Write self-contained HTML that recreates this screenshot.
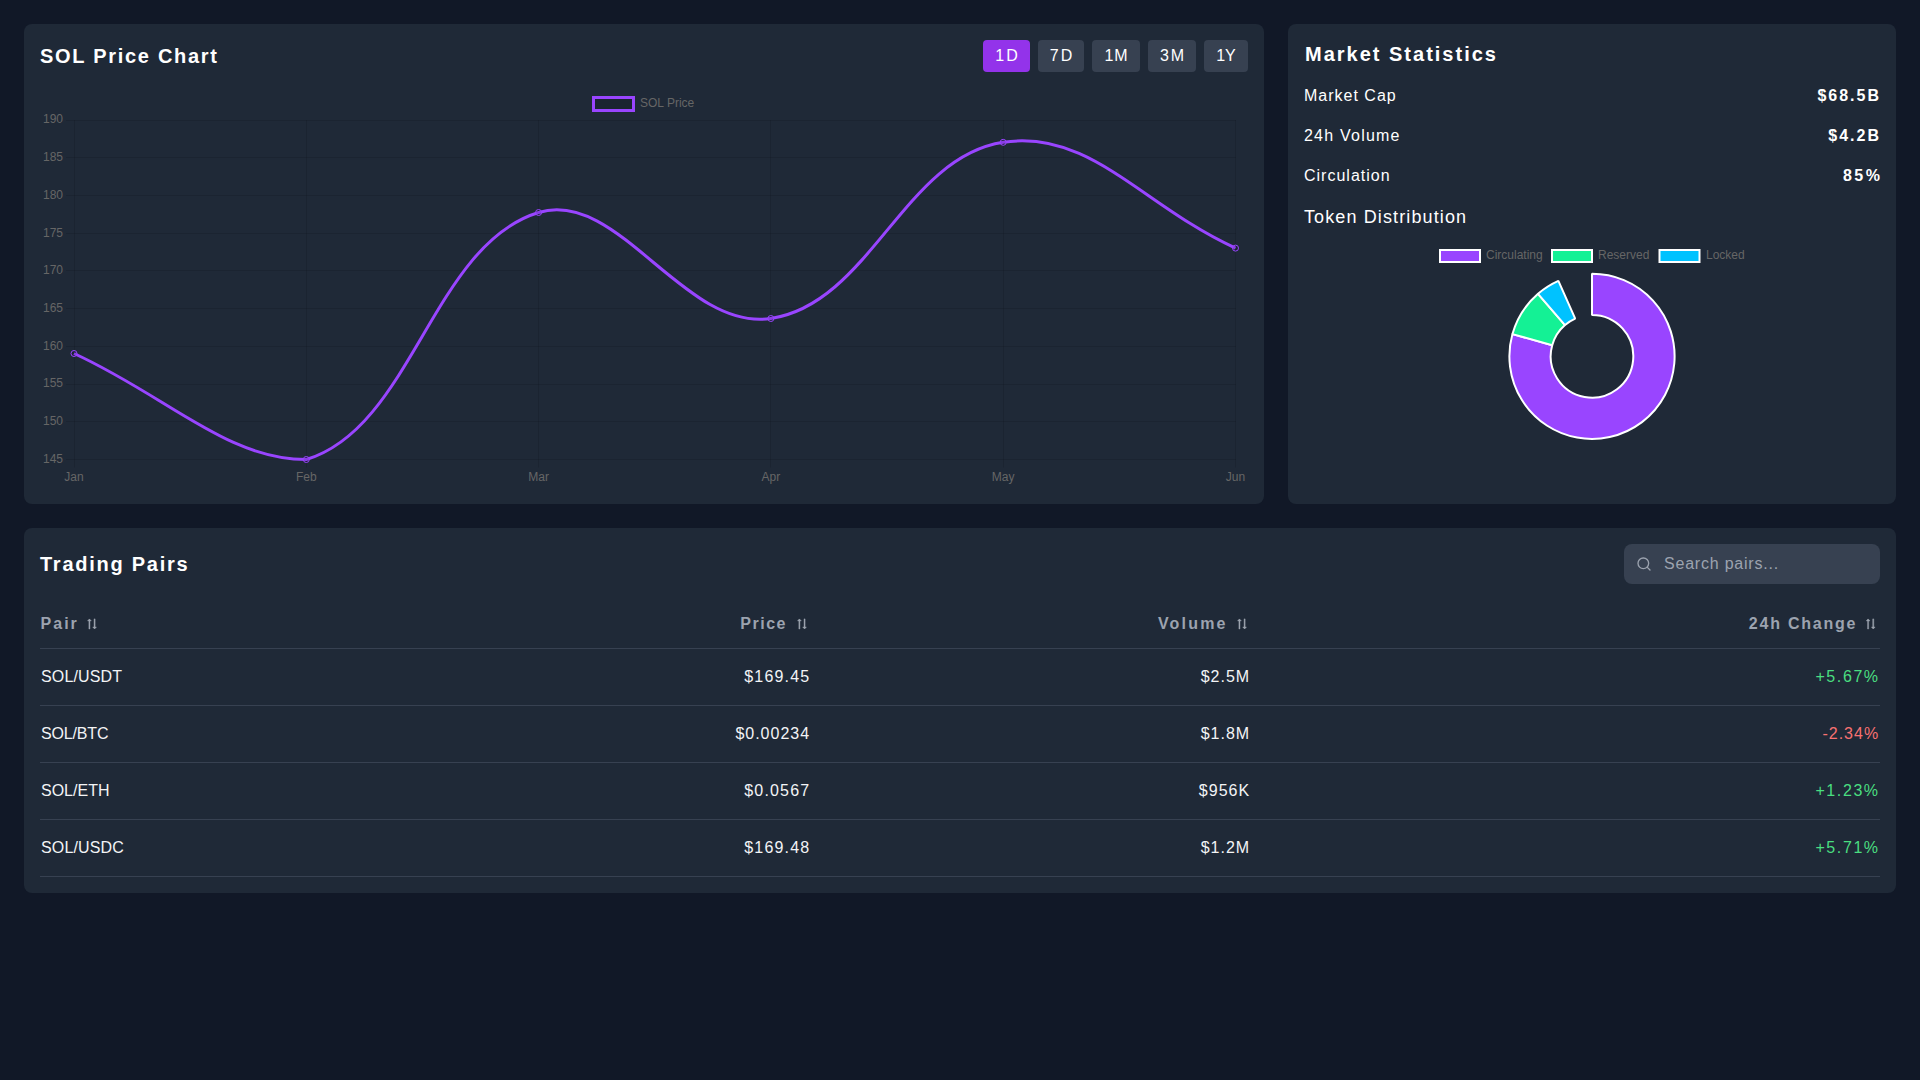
<!DOCTYPE html>
<html><head><meta charset="utf-8"><title>SOL Dashboard</title>
<style>
html,body{margin:0;padding:0;}
body{width:1920px;height:1080px;background:#111827;position:relative;overflow:hidden;font-family:"Liberation Sans", sans-serif;}
.card{position:absolute;background:#1f2937;border-radius:8px;}
.t{position:absolute;white-space:pre;}
.btn{position:absolute;top:40px;height:32px;border-radius:4px;color:#fff;font-size:16px;line-height:32px;text-align:center;}
.hl{position:absolute;left:40px;width:1840px;height:1px;background:#374151;}
svg{position:absolute;left:0;top:0;}
</style></head>
<body>
<div class="card" style="left:24px;top:24px;width:1240px;height:480px"></div>
<div class="card" style="left:1288px;top:24px;width:608px;height:480px"></div>
<div class="card" style="left:24px;top:528px;width:1872px;height:365px"></div>
<div style="position:absolute;left:1624px;top:544px;width:256px;height:40px;background:#374151;border-radius:8px"></div>
<div class="hl" style="top:648px"></div><div class="hl" style="top:705px"></div><div class="hl" style="top:762px"></div><div class="hl" style="top:819px"></div><div class="hl" style="top:876px"></div>
<svg width="1920" height="1080" viewBox="0 0 1920 1080">
 <g stroke="rgba(0,0,0,0.1)" stroke-width="1" fill="none"><line x1="66" y1="120.5" x2="1236.0" y2="120.5"/><line x1="66" y1="157.5" x2="1236.0" y2="157.5"/><line x1="66" y1="195.5" x2="1236.0" y2="195.5"/><line x1="66" y1="233.5" x2="1236.0" y2="233.5"/><line x1="66" y1="270.5" x2="1236.0" y2="270.5"/><line x1="66" y1="308.5" x2="1236.0" y2="308.5"/><line x1="66" y1="346.5" x2="1236.0" y2="346.5"/><line x1="66" y1="384.5" x2="1236.0" y2="384.5"/><line x1="66" y1="421.5" x2="1236.0" y2="421.5"/><line x1="66" y1="459.5" x2="1236.0" y2="459.5"/><line x1="74.5" y1="120.0" x2="74.5" y2="467.5"/><line x1="306.5" y1="120.0" x2="306.5" y2="467.5"/><line x1="538.5" y1="120.0" x2="538.5" y2="467.5"/><line x1="770.5" y1="120.0" x2="770.5" y2="467.5"/><line x1="1003.5" y1="120.0" x2="1003.5" y2="467.5"/><line x1="1235.5" y1="120.0" x2="1235.5" y2="467.5"/></g>
 <g font-family='"Liberation Sans", sans-serif' font-size="12" fill="#666"><text x="63" y="123.3" text-anchor="end">190</text><text x="63" y="161.0" text-anchor="end">185</text><text x="63" y="198.7" text-anchor="end">180</text><text x="63" y="236.5" text-anchor="end">175</text><text x="63" y="274.2" text-anchor="end">170</text><text x="63" y="311.9" text-anchor="end">165</text><text x="63" y="349.6" text-anchor="end">160</text><text x="63" y="387.4" text-anchor="end">155</text><text x="63" y="425.1" text-anchor="end">150</text><text x="63" y="462.8" text-anchor="end">145</text><text x="74.0" y="481" text-anchor="middle">Jan</text><text x="306.3" y="481" text-anchor="middle">Feb</text><text x="538.6" y="481" text-anchor="middle">Mar</text><text x="770.9" y="481" text-anchor="middle">Apr</text><text x="1003.2" y="481" text-anchor="middle">May</text><text x="1235.5" y="481" text-anchor="middle">Jun</text></g>
 <rect x="593.5" y="97.5" width="40" height="13" fill="rgba(0,0,0,0.1)" stroke="#9945FF" stroke-width="3"/>
 <text x="640" y="107.4" font-family='"Liberation Sans", sans-serif' font-size="12" fill="#666">SOL Price</text>
 <path d="M74.00,353.50 C166.92,395.90 226.47,459.50 306.30,459.50 C412.31,427.33 432.59,244.67 538.60,212.50 C618.43,188.27 684.13,331.61 770.90,318.50 C869.97,303.53 904.11,157.31 1003.20,142.30 C1089.95,129.15 1142.58,205.78 1235.50,248.10" fill="none" stroke="#9945FF" stroke-width="3"/>
 <g fill="rgba(0,0,0,0.1)" stroke="#9945FF" stroke-width="1"><circle cx="74.00" cy="353.50" r="3"/><circle cx="306.30" cy="459.50" r="3"/><circle cx="538.60" cy="212.50" r="3"/><circle cx="770.90" cy="318.50" r="3"/><circle cx="1003.20" cy="142.30" r="3"/><circle cx="1235.50" cy="248.10" r="3"/></g>
 <g stroke="#fff" stroke-width="2">
  <rect x="1440" y="250" width="40" height="12" fill="#9945FF"/>
  <rect x="1552" y="250" width="40" height="12" fill="#14F195"/>
  <rect x="1659.5" y="250" width="40" height="12" fill="#00C2FF"/>
 </g>
 <g font-family='"Liberation Sans", sans-serif' font-size="12" fill="#666">
  <text x="1486" y="259">Circulating</text><text x="1598" y="259">Reserved</text><text x="1706" y="259">Locked</text>
 </g>
 <g stroke="#fff" stroke-width="2" stroke-linejoin="bevel"><path d="M1592.00,273.70 A82.6,82.6 0 1 1 1512.44,334.10 L1552.22,345.20 A41.3,41.3 0 1 0 1592.00,315.00 Z" fill="#9945FF"/><path d="M1512.44,334.10 A82.6,82.6 0 0 1 1538.02,293.78 L1565.01,325.04 A41.3,41.3 0 0 0 1552.22,345.20 Z" fill="#14F195"/><path d="M1538.02,293.78 A82.6,82.6 0 0 1 1558.39,280.85 L1575.19,318.57 A41.3,41.3 0 0 0 1565.01,325.04 Z" fill="#00C2FF"/></g>
 <g stroke="#9ca3af" stroke-width="1.33" fill="none" stroke-linecap="round" stroke-linejoin="round">
  <circle cx="1643.33" cy="563.33" r="5.33"/><path d="M1650,570 L1647.13,567.13"/>
 </g>
 <g fill="#9ca3af" stroke="#9ca3af" stroke-width="0.4" stroke-linejoin="round"><rect x="88.88" y="619.70" width="1.1" height="9.30"/><path d="M87.53,620.90 L89.43,618.90 L91.33,620.90 Z"/><rect x="94.03" y="618.90" width="1.1" height="9.30"/><path d="M92.68,627.00 L94.58,629.00 L96.48,627.00 Z"/><rect x="798.85" y="619.70" width="1.1" height="9.30"/><path d="M797.50,620.90 L799.40,618.90 L801.30,620.90 Z"/><rect x="804.00" y="618.90" width="1.1" height="9.30"/><path d="M802.65,627.00 L804.55,629.00 L806.45,627.00 Z"/><rect x="1238.90" y="619.70" width="1.1" height="9.30"/><path d="M1237.55,620.90 L1239.45,618.90 L1241.35,620.90 Z"/><rect x="1244.05" y="618.90" width="1.1" height="9.30"/><path d="M1242.70,627.00 L1244.60,629.00 L1246.50,627.00 Z"/><rect x="1867.55" y="619.70" width="1.1" height="9.30"/><path d="M1866.20,620.90 L1868.10,618.90 L1870.00,620.90 Z"/><rect x="1872.70" y="618.90" width="1.1" height="9.30"/><path d="M1871.35,627.00 L1873.25,629.00 L1875.15,627.00 Z"/></g>
</svg>
<div class="t" style="top:40.99px;font-size:20px;font-weight:700;color:#fff;line-height:30px;letter-spacing:1.714px;left:40px;">SOL Price Chart</div><div class="btn" style="left:983px;width:47px;background:#9333ea"><span style="letter-spacing:2.0px;margin-right:-2.0px">1D</span></div><div class="btn" style="left:1038px;width:46px;background:#374151"><span style="letter-spacing:2.0px;margin-right:-2.0px">7D</span></div><div class="btn" style="left:1092px;width:48px;background:#374151"><span style="letter-spacing:1.0px;margin-right:-1.0px">1M</span></div><div class="btn" style="left:1148px;width:48px;background:#374151"><span style="letter-spacing:2.0px;margin-right:-2.0px">3M</span></div><div class="btn" style="left:1204px;width:44px;background:#374151"><span style="letter-spacing:0.0px;margin-right:-0.0px">1Y</span></div><div class="t" style="top:38.99px;font-size:20px;font-weight:700;color:#fff;line-height:30px;letter-spacing:2.000px;left:1305px;">Market Statistics</div><div class="t" style="top:83.99px;font-size:16px;font-weight:400;color:#fff;line-height:24px;letter-spacing:1.000px;left:1304px;">Market Cap</div><div class="t" style="top:83.99px;font-size:16px;font-weight:700;color:#fff;line-height:24px;letter-spacing:2.000px;right:39.00px;">$68.5B</div><div class="t" style="top:123.99px;font-size:16px;font-weight:400;color:#fff;line-height:24px;letter-spacing:1.222px;left:1304px;">24h Volume</div><div class="t" style="top:123.99px;font-size:16px;font-weight:700;color:#fff;line-height:24px;letter-spacing:2.000px;right:39.00px;">$4.2B</div><div class="t" style="top:163.99px;font-size:16px;font-weight:400;color:#fff;line-height:24px;letter-spacing:1.000px;left:1304px;">Circulation</div><div class="t" style="top:163.99px;font-size:16px;font-weight:700;color:#fff;line-height:24px;letter-spacing:2.500px;right:37.50px;">85%</div><div class="t" style="top:203.86px;font-size:18px;font-weight:400;color:#fff;line-height:27px;letter-spacing:1.118px;left:1304px;">Token Distribution</div><div class="t" style="top:548.99px;font-size:20px;font-weight:700;color:#fff;line-height:30px;letter-spacing:1.750px;left:40px;">Trading Pairs</div><div class="t" style="top:551.99px;font-size:16px;font-weight:400;color:#9ca3af;line-height:24px;letter-spacing:0.786px;left:1664px;">Search pairs...</div><div class="t" style="top:611.99px;font-size:16px;font-weight:700;color:#9ca3af;line-height:24px;letter-spacing:2.000px;left:40.6px;">Pair</div><div class="t" style="top:611.99px;font-size:16px;font-weight:700;color:#9ca3af;line-height:24px;letter-spacing:1.500px;right:1133.00px;">Price</div><div class="t" style="top:611.99px;font-size:16px;font-weight:700;color:#9ca3af;line-height:24px;letter-spacing:2.200px;right:692.30px;">Volume</div><div class="t" style="top:611.99px;font-size:16px;font-weight:700;color:#9ca3af;line-height:24px;letter-spacing:1.778px;right:62.72px;">24h Change</div><div class="t" style="top:664.99px;font-size:16px;font-weight:400;color:#f3f4f6;line-height:24px;letter-spacing:0.143px;left:41px;">SOL/USDT</div><div class="t" style="top:664.99px;font-size:16px;font-weight:400;color:#f3f4f6;line-height:24px;letter-spacing:1.167px;right:1109.73px;">$169.45</div><div class="t" style="top:664.99px;font-size:16px;font-weight:400;color:#f3f4f6;line-height:24px;letter-spacing:1.000px;right:669.90px;">$2.5M</div><div class="t" style="top:664.99px;font-size:16px;font-weight:400;color:#4ade80;line-height:24px;letter-spacing:1.600px;right:40.30px;">+5.67%</div><div class="t" style="top:721.99px;font-size:16px;font-weight:400;color:#f3f4f6;line-height:24px;letter-spacing:-0.167px;left:41px;">SOL/BTC</div><div class="t" style="top:721.99px;font-size:16px;font-weight:400;color:#f3f4f6;line-height:24px;letter-spacing:1.000px;right:1109.90px;">$0.00234</div><div class="t" style="top:721.99px;font-size:16px;font-weight:400;color:#f3f4f6;line-height:24px;letter-spacing:1.000px;right:669.90px;">$1.8M</div><div class="t" style="top:721.99px;font-size:16px;font-weight:400;color:#f87171;line-height:24px;letter-spacing:1.000px;right:40.90px;">-2.34%</div><div class="t" style="top:778.99px;font-size:16px;font-weight:400;color:#f3f4f6;line-height:24px;letter-spacing:0.000px;left:41px;">SOL/ETH</div><div class="t" style="top:778.99px;font-size:16px;font-weight:400;color:#f3f4f6;line-height:24px;letter-spacing:1.167px;right:1109.73px;">$0.0567</div><div class="t" style="top:778.99px;font-size:16px;font-weight:400;color:#f3f4f6;line-height:24px;letter-spacing:1.000px;right:669.90px;">$956K</div><div class="t" style="top:778.99px;font-size:16px;font-weight:400;color:#4ade80;line-height:24px;letter-spacing:1.600px;right:40.30px;">+1.23%</div><div class="t" style="top:835.99px;font-size:16px;font-weight:400;color:#f3f4f6;line-height:24px;letter-spacing:0.143px;left:41px;">SOL/USDC</div><div class="t" style="top:835.99px;font-size:16px;font-weight:400;color:#f3f4f6;line-height:24px;letter-spacing:1.167px;right:1109.73px;">$169.48</div><div class="t" style="top:835.99px;font-size:16px;font-weight:400;color:#f3f4f6;line-height:24px;letter-spacing:1.000px;right:669.90px;">$1.2M</div><div class="t" style="top:835.99px;font-size:16px;font-weight:400;color:#4ade80;line-height:24px;letter-spacing:1.600px;right:40.30px;">+5.71%</div>
</body></html>
